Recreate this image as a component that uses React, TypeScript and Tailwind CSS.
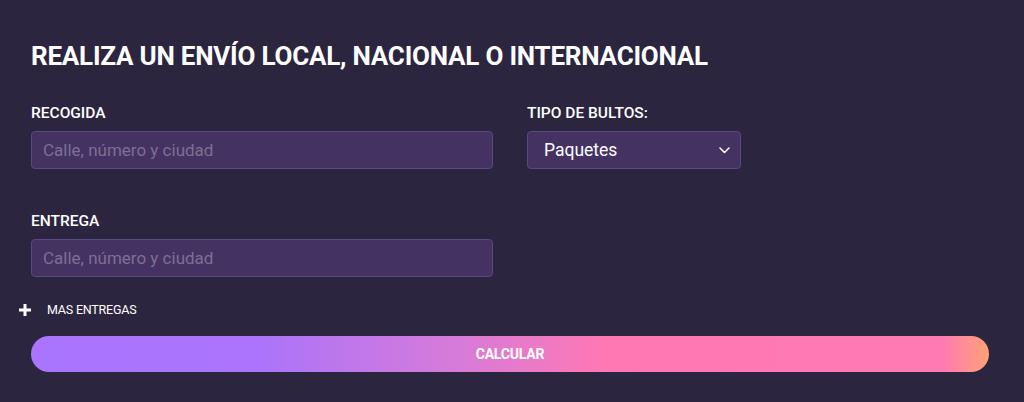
import React from "react";

export default function App() {
  return (
    <div
      className="w-[1024px] h-[402px] bg-[#2c2540] text-white overflow-hidden"
      style={{ fontFamily: "Roboto, 'Liberation Sans', sans-serif" }}
    >
      <div className="pl-[31px] pr-[35px] pt-[41px]">
        <h1 className="text-[26px] leading-[30px] font-bold tracking-[-0.22px] text-white">
          REALIZA UN ENVÍO LOCAL, NACIONAL O INTERNACIONAL
        </h1>
        <div className="flex gap-[34px] mt-[33px]">
          <div className="flex flex-col w-[462px]">
            <label className="text-[15.5px] leading-[18px] font-medium">RECOGIDA</label>
            <input
              placeholder="Calle, número y ciudad"
              className="mt-[9px] h-[38px] w-full rounded-[4px] bg-[#443263] border border-[#5b4882] px-[11px] text-[17px] text-white placeholder:text-[#7d6f95] outline-none"
            />
          </div>
          <div className="flex flex-col w-[214px]">
            <label className="text-[15.5px] leading-[18px] font-medium">TIPO DE BULTOS:</label>
            <div className="mt-[9px] h-[38px] w-full rounded-[4px] bg-[#443263] border border-[#5b4882] pl-[16px] pr-[10px] flex items-center justify-between">
              <span className="text-[17.5px] text-white">Paquetes</span>
              <svg width="11" height="7" viewBox="0 0 11 7" fill="none">
                <path d="M1 1 L5.5 5.5 L10 1" stroke="white" strokeWidth="1.5" strokeLinecap="round" strokeLinejoin="round" />
              </svg>
            </div>
          </div>
        </div>
        <div className="flex flex-col w-[462px] mt-[43px]">
          <label className="text-[15.5px] leading-[18px] font-medium">ENTREGA</label>
          <input
            placeholder="Calle, número y ciudad"
            className="mt-[9px] h-[38px] w-full rounded-[4px] bg-[#443263] border border-[#5b4882] px-[11px] text-[17px] text-white placeholder:text-[#7d6f95] outline-none"
          />
        </div>
      </div>
      <div className="flex items-center pl-[19px] mt-[26px]">
        <svg width="12" height="12" viewBox="0 0 12 12">
          <rect x="4.5" y="0" width="3" height="12" fill="white" />
          <rect x="0" y="4.5" width="12" height="3" fill="white" />
        </svg>
        <span className="ml-[16px] text-[12.5px] leading-[14px] tracking-[-0.2px]">MAS ENTREGAS</span>
      </div>
      <div className="pl-[31px] pr-[35px] mt-[19px]">
        <button
          className="w-full h-[36px] rounded-full text-[14px] font-bold text-white tracking-[-0.2px]"
          style={{
            background:
              "linear-gradient(90deg, #a974ff 0%, #ab74fa 24%, #d87bd8 45%, #ff78b4 60%, #ff79b3 95%, #ffa176 100%)",
          }}
        >
          CALCULAR
        </button>
      </div>
    </div>
  );
}
